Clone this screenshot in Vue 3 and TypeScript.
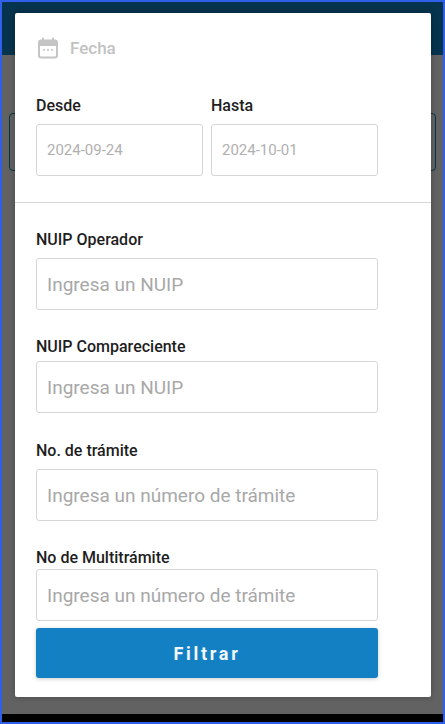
<script setup lang="ts">
interface Field { label: string; placeholder: string; cls: string }
const fields: Field[] = [
  { label: 'NUIP Operador', placeholder: 'Ingresa un NUIP', cls: 'f1' },
  { label: 'NUIP Compareciente', placeholder: 'Ingresa un NUIP', cls: 'f2' },
  { label: 'No. de trámite', placeholder: 'Ingresa un número de trámite', cls: 'f3' },
  { label: 'No de Multitrámite', placeholder: 'Ingresa un número de trámite', cls: 'f4' },
]
</script>

<template>
  <div class="frame">
    <div class="header"></div>
    <div class="content">
      <div class="under-box"></div>
    </div>
    <div class="navbar"></div>

    <div class="modal">
      <div class="date-section">
        <div class="title">
          <svg class="cal" viewBox="0 0 24 24" width="24" height="24" fill="none">
            <path d="M7 2.500v3M17 2.500v3" stroke="#c4c4c4" stroke-width="2" stroke-linecap="round"/>
            <rect x="3" y="4.500" width="18" height="17" rx="2" stroke="#c4c4c4" stroke-width="2"/>
            <path d="M3 5.500a1.500 1.500 0 0 1 1.500-1.500h15A1.500 1.500 0 0 1 21 5.500V10H3z" fill="#c4c4c4"/>
            <circle cx="8" cy="14" r="1" fill="#c4c4c4"/><circle cx="12" cy="14" r="1" fill="#c4c4c4"/><circle cx="16" cy="14" r="1" fill="#c4c4c4"/>
          </svg>
          <span>Fecha</span>
        </div>
        <div class="dates">
          <label class="date-col">
            <span class="lbl">Desde</span>
            <span class="input small">2024-09-24</span>
          </label>
          <label class="date-col">
            <span class="lbl">Hasta</span>
            <span class="input small">2024-10-01</span>
          </label>
        </div>
      </div>
      <div class="form">
        <label v-for="f in fields" :key="f.label" class="field" :class="f.cls">
          <span class="lbl">{{ f.label }}</span>
          <span class="input">{{ f.placeholder }}</span>
        </label>
        <button class="btn" type="button">Filtrar</button>
      </div>
    </div>
  </div>
</template>

<style>
html, body { margin: 0; padding: 0; background: #2f5fe8; }
</style>

<style scoped>
.frame {
  position: relative;
  box-sizing: border-box;
  width: 445px;
  height: 724px;
  border: 2px solid #3060ea;
  display: flex;
  flex-direction: column;
  overflow: hidden;
  font-family: Roboto, "Liberation Sans", sans-serif;
  background: #5e5e5e;
}
.header { height: 53px; background: #06334d; flex: none; }
.content { flex: 1; background: #626262; padding: 58px 7px 0; }
.under-box {
  height: 56px;
  border: 1.500px solid #06334d;
  border-radius: 4px;
}
.navbar { height: 8px; background: #000; flex: none; }
.modal {
  position: absolute;
  left: 13px;
  top: 11px;
  width: 416px;
  height: 684px;
  background: #fff;
  border-radius: 2px;
  box-sizing: border-box;
  box-shadow: 0 0 6px rgba(0,0,0,.25);
}
.date-section {
  height: 190px;
  box-sizing: border-box;
  padding: 21px 21px 0;
  border-bottom: 1.500px solid #d6d6d6;
}
.title {
  display: flex;
  align-items: center;
  gap: 10px;
  height: 28px;
  color: #c2c2c2;
  font-size: 17px;
  font-weight: 500;
}
.dates {
  display: flex;
  gap: 8.500px;
  margin-top: 34px;
}
.date-col { width: 166.500px; display: block; }
.lbl {
  display: block;
  font-size: 16px;
  font-weight: 500;
  line-height: 20px;
  color: #1e1e1e;
}
.input {
  display: flex;
  align-items: center;
  box-sizing: border-box;
  height: 52px;
  padding: 0 10px;
  border: 1.500px solid #d6d6d6;
  border-radius: 3px;
  color: #a8a8a8;
  font-size: 19px;
  background: #fff;
}
.input.small { font-size: 15px; margin-top: 8px; color: #b0b0b0; }
.form { padding: 0 21px; display: flex; flex-direction: column; }
.field { display: block; width: 342px; }
.f1 { margin-top: 27px; }
.f1 .input { margin-top: 8px; }
.f2 { margin-top: 27px; }
.f2 .input { margin-top: 4px; }
.f3 { margin-top: 28px; }
.f3 .input { margin-top: 8px; }
.f4 { margin-top: 27px; }
.f4 .input { margin-top: 1px; }
.btn {
  width: 342px;
  height: 50px;
  margin-top: 7px;
  border: none;
  border-radius: 3px;
  background: #1380c4;
  color: #f2f7fb;
  font-family: Roboto, sans-serif;
  font-size: 18px;
  font-weight: 700;
  letter-spacing: 2.700px;
  box-shadow: 0 1px 4px rgba(0,0,0,.2);
}
</style>
